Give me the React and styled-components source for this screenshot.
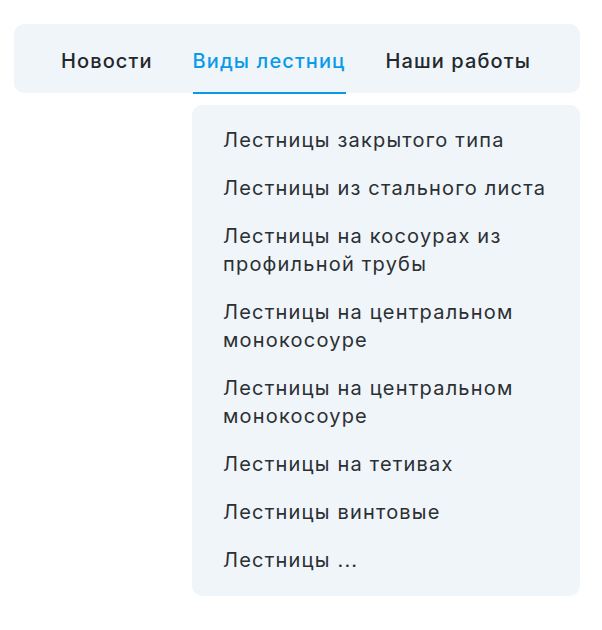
import React from "react";
import styled, { createGlobalStyle } from "styled-components";

const GlobalStyle = createGlobalStyle`
  body {
    margin: 0;
    background: #ffffff;
    font-family: Inter, "Noto Sans", sans-serif;
  }
`;

const links = ["Новости", "Виды лестниц", "Наши работы"];

const stairs = [
  "Лестницы закрытого типа",
  "Лестницы из стального листа",
  "Лестницы на косоурах из профильной трубы",
  "Лестницы на центральном монокосоуре",
  "Лестницы на центральном монокосоуре",
  "Лестницы на тетивах",
  "Лестницы винтовые",
  "Лестницы ...",
];

const App = () => {
  return (
    <Page>
      <GlobalStyle />
      <Menu>
        <NavBar>
          {links.map((l) => (
            <NavItem key={l} $active={l === "Виды лестниц"}>
              {l}
            </NavItem>
          ))}
        </NavBar>
        <Dropdown>
          {stairs.map((s, i) => (
            <DropItem key={i}>{s}</DropItem>
          ))}
        </Dropdown>
      </Menu>
    </Page>
  );
};

const Page = styled.div`
  padding: 24px 22px 0 14px;
`;

const Menu = styled.div`
  display: flex;
  flex-direction: column;
  align-items: flex-end;
  gap: 12px;
`;

const NavBar = styled.nav`
  align-self: stretch;
  height: 69px;
  background: #f0f5fa;
  border-radius: 10px;
  display: flex;
  align-items: stretch;
  padding-left: 47px;
  gap: 41px;
  box-sizing: border-box;
`;

const NavItem = styled.a`
  display: flex;
  align-items: center;
  font-size: 20px;
  font-weight: 500;
  letter-spacing: 1.1px;
  margin-right: -1px;
  color: ${(p) => (p.$active ? "#0a9be8" : "#23282c")};
  border-bottom: 2px solid ${(p) => (p.$active ? "#0a9be8" : "transparent")};
  margin-bottom: -1px;
  padding-top: 5px;
  cursor: pointer;
`;

const Dropdown = styled.ul`
  list-style: none;
  margin: 0;
  width: 388px;
  box-sizing: border-box;
  background: #f0f5fa;
  border-radius: 10px;
  padding: 21px 20px 22px 31px;
  display: flex;
  flex-direction: column;
  gap: 20px;
`;

const DropItem = styled.li`
  font-size: 20px;
  line-height: 28px;
  letter-spacing: 1.2px;
  color: #2b3033;
`;

export default App;
